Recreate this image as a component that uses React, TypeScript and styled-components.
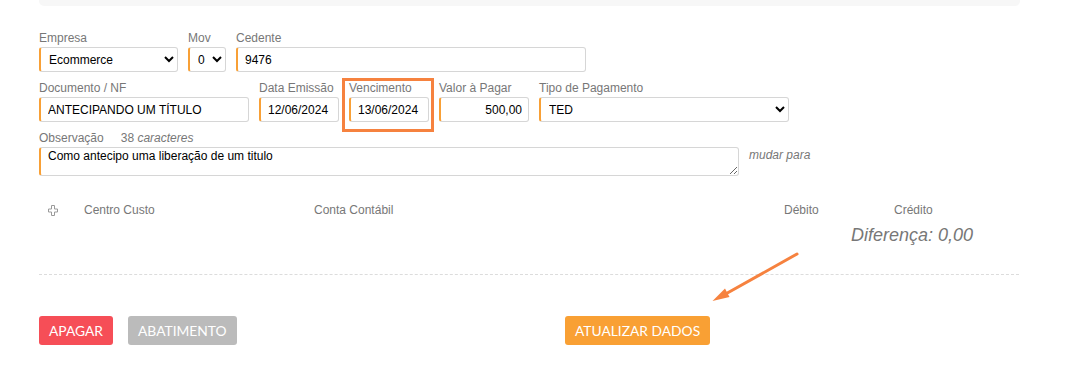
import React from "react";
import styled, { createGlobalStyle } from "styled-components";

const GlobalStyle = createGlobalStyle`
  html, body { margin: 0; padding: 0; background: #fff; }
  body { font-family: "Liberation Sans", Arial, sans-serif; }
`;

const Page = styled.div`
  position: relative;
  width: 1091px;
  height: 381px;
  overflow: hidden;
  padding: 0 72px 0 39px;
  box-sizing: border-box;
`;

const TopPanel = styled.div`
  height: 6px;
  width: 981px;
  background: #f7f7f7;
  border-radius: 0 0 5px 5px;
`;

const Form = styled.div`
  margin-top: 24px;
  display: flex;
  flex-direction: column;
  gap: 8px;
`;

const Row = styled.div`
  display: flex;
  gap: 10px;
  align-items: flex-start;
`;

const Field = styled.div<{ $w: number }>`
  position: relative;
  width: ${(p) => p.$w}px;
  display: flex;
  flex-direction: column;
`;

const Label = styled.label`
  font-size: 12px;
  line-height: 16px;
  height: 16px;
  margin-bottom: 1px;
  color: #777;
  white-space: nowrap;
`;

const Count = styled.span`
  margin-left: 17px;
  color: #777;
`;

const Em = styled.em`
  font-style: italic;
`;

const controlBase = `
  box-sizing: border-box;
  width: 100%;
  height: 25px;
  border: 1px solid #d6d6d6;
  border-left: 2px solid #f8a036;
  border-radius: 3px;
  background: #fff;
  color: #000;
  font-family: "Liberation Sans", Arial, sans-serif;
  font-size: 12px;
  outline: none;
  margin: 0;
`;

const Input = styled.input<{ $right?: boolean }>`
  ${controlBase}
  padding: 0 6px 0 7px;
  text-align: ${(p) => (p.$right ? "right" : "left")};
`;

const Select = styled.select`
  ${controlBase}
  padding: 0 2px 0 4px;
`;

const TextArea = styled.textarea`
  ${controlBase}
  height: 29px;
  padding: 1px 7px;
  resize: vertical;
  line-height: 14px;
`;

const Highlight = styled.div`
  position: absolute;
  left: -7px;
  top: -2px;
  width: 92px;
  height: 54px;
  box-sizing: border-box;
  border: 3px solid #f6823f;
  pointer-events: none;
`;

const Hint = styled.span`
  font-size: 12px;
  font-style: italic;
  color: #777;
  line-height: 16px;
  margin-top: 17px;
`;

const TableHead = styled.div`
  margin-top: 26px;
  display: grid;
  grid-template-columns: 45px 230px 470px 110px 1fr;
  font-size: 12px;
  line-height: 16px;
  color: #777;
`;

const AddCell = styled.div`
  padding-left: 9px;
  display: flex;
  align-items: center;
  height: 16px;
`;

const Diff = styled.div`
  margin-top: 7px;
  padding-right: 46px;
  text-align: right;
  font-size: 18px;
  line-height: 20px;
  font-style: italic;
  color: #777;
`;

const Divider = styled.hr`
  margin: 29px 0 0;
  width: 980px;
  border: 0;
  border-top: 1px dashed #dcdcdc;
  height: 0;
`;

const Actions = styled.div`
  margin-top: 41px;
  display: grid;
  grid-template-columns: 526px auto;
`;

const LeftActions = styled.div`
  display: flex;
  gap: 15px;
`;

const Button = styled.button<{ $color: string }>`
  height: 29px;
  padding: 0 10px;
  border: 0;
  border-radius: 3px;
  background: ${(p) => p.$color};
  color: #fff;
  font-family: Lato, "Liberation Sans", sans-serif;
  font-size: 13.8px;
  text-transform: uppercase;
  cursor: pointer;
`;

const RightActions = styled.div`
  display: flex;
`;

const ArrowSvg = styled.svg`
  position: absolute;
  left: 0;
  top: 0;
  pointer-events: none;
`;

const PlusIcon = () => (
  <svg width="10" height="11" viewBox="0 0 10 11">
    <path
      d="M3.5 0.5 H6.5 V4 H9.5 V7 H6.5 V10.5 H3.5 V7 H0.5 V4 H3.5 Z"
      fill="none"
      stroke="#9a9a9a"
      strokeWidth="1"
    />
  </svg>
);

export default function App() {
  return (
    <Page>
      <GlobalStyle />
      <TopPanel />
      <Form>
        <Row>
          <Field $w={139}>
            <Label>Empresa</Label>
            <Select defaultValue="Ecommerce">
              <option>Ecommerce</option>
            </Select>
          </Field>
          <Field $w={38}>
            <Label>Mov</Label>
            <Select defaultValue="0">
              <option>0</option>
            </Select>
          </Field>
          <Field $w={350}>
            <Label>Cedente</Label>
            <Input defaultValue="9476" />
          </Field>
        </Row>
        <Row>
          <Field $w={210}>
            <Label>Documento / NF</Label>
            <Input defaultValue="ANTECIPANDO UM TÍTULO" />
          </Field>
          <Field $w={80}>
            <Label>Data Emissão</Label>
            <Input defaultValue="12/06/2024" />
          </Field>
          <Field $w={80}>
            <Label>Vencimento</Label>
            <Input defaultValue="13/06/2024" />
            <Highlight />
          </Field>
          <Field $w={90}>
            <Label>Valor à Pagar</Label>
            <Input $right defaultValue="500,00" />
          </Field>
          <Field $w={250}>
            <Label>Tipo de Pagamento</Label>
            <Select defaultValue="TED">
              <option>TED</option>
            </Select>
          </Field>
        </Row>
        <Row>
          <Field $w={700}>
            <Label>
              Observação<Count>38 <Em>caracteres</Em></Count>
            </Label>
            <TextArea defaultValue="Como antecipo uma liberação de um titulo" />
          </Field>
          <Hint>mudar para</Hint>
        </Row>
      </Form>
      <TableHead>
        <AddCell>
          <PlusIcon />
        </AddCell>
        <div>Centro Custo</div>
        <div>Conta Contábil</div>
        <div>Débito</div>
        <div>Crédito</div>
      </TableHead>
      <Diff>Diferença: 0,00</Diff>
      <Divider />
      <Actions>
        <LeftActions>
          <Button $color="#f64e57">Apagar</Button>
          <Button $color="#bbbbbb">Abatimento</Button>
        </LeftActions>
        <RightActions>
          <Button $color="#f9a034">Atualizar Dados</Button>
        </RightActions>
      </Actions>
      <ArrowSvg width="1091" height="381" viewBox="0 0 1091 381">
        <line x1="797" y1="254" x2="722" y2="296" stroke="#f6823f" strokeWidth="3" strokeLinecap="round" />
        <polygon points="712.5,301 725,288.5 729.5,297" fill="#f6823f" />
      </ArrowSvg>
    </Page>
  );
}
